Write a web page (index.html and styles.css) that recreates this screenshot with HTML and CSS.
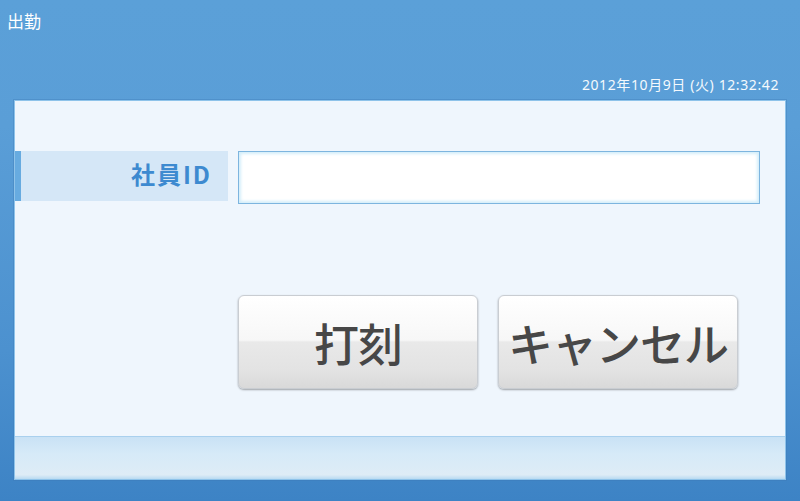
FILE: index.html
```html
<!DOCTYPE html>
<html lang="ja">
<head>
  <meta charset="UTF-8" />
  <title>出勤</title>
  <link rel="stylesheet" href="styles.css">
</head>
<body>
  <header class="top">
    <h1 class="title">出勤</h1>
    <div class="clock">2012年10月9日 (火) 12:32:42</div>
  </header>
  <div class="panel">
    <div class="panel-body">
      <div class="field-row">
        <label class="field-label" for="empId">社員ID</label>
        <input class="field-input" type="text" id="empId" />
      </div>
      <div class="actions">
        <button class="big-btn">打刻</button>
        <button class="big-btn">キャンセル</button>
      </div>
    </div>
    <div class="panel-foot"></div>
  </div>
</body>
</html>
```

FILE: styles.css
```css
html, body {
  height: 100%;
}
body {
  margin: 0;
  width: 800px;
  height: 501px;
  overflow: hidden;
  font-family: "Noto Sans", "Noto Sans CJK JP", sans-serif;
  background: linear-gradient(to bottom, #5ba0d8 0%, #5a9ed7 25%, #4c91cf 70%, #3d83c5 100%);
  display: flex;
  flex-direction: column;
}
.top {
  height: 100px;
  display: flex;
  flex-direction: column;
  justify-content: space-between;
  color: white;
}
.title {
  margin: 0;
  padding: 10px 0 0 7px;
  font-size: 17px;
  font-weight: normal;
  line-height: 24px;
}
.clock {
  text-align: right;
  padding-right: 21px;
  font-size: 14px;
  letter-spacing: 0.6px;
  line-height: 16px;
  margin-bottom: 7px;
  color: #f4f9fd;
}
.panel {
  margin: 0 14px;
  height: 380px;
  box-sizing: border-box;
  background: #eff6fd;
  border: 1px solid #8ec3ea;
  box-shadow: 0 0 0 1px rgba(60, 120, 180, 0.35);
  display: flex;
  flex-direction: column;
}
.panel-body {
  flex: 1;
  padding-top: 50px;
}
.field-row {
  display: flex;
  align-items: flex-start;
}
.field-label {
  width: 213px;
  height: 50px;
  box-sizing: border-box;
  border-left: 6px solid #67abe0;
  background: #d5e7f7;
  color: #3d8ad0;
  font-weight: bold;
  font-size: 24px;
  letter-spacing: 2px;
  line-height: 46px;
  text-align: right;
  padding-right: 16px;
  font-family: "Noto Sans CJK JP", sans-serif;
}
.field-input {
  margin-left: 10px;
  width: 522px;
  height: 53px;
  box-sizing: border-box;
  border: 1px solid #7db5df;
  background: #fff;
  box-shadow: inset 0 0 3px 2px #d4eefa;
  outline: none;
}
.actions {
  display: flex;
  gap: 20px;
  padding-left: 223px;
  margin-top: 91px;
}
.big-btn {
  width: 240px;
  height: 94px;
  border: 1px solid #c9cdd2;
  border-radius: 6px;
  background: linear-gradient(to bottom, #ffffff 0%, #f7f7f7 48%, #e9e9e9 50%, #e3e3e3 80%, #d9d9d9 100%);
  box-shadow: 0 1px 2px rgba(0, 0, 0, 0.35);
  font-family: "Noto Sans CJK JP", sans-serif;
  font-size: 45px;
  font-weight: 500;
  color: #474747;
  padding: 0;
  white-space: nowrap;
  overflow: visible;
  letter-spacing: -1px;
}
.panel-foot {
  height: 42px;
  border-top: 1px solid #a9d0ee;
  background: linear-gradient(to bottom, #c9e2f5 0%, #d6eaf8 40%, #deecf6 90%, #b9daf1 100%);
}
```
